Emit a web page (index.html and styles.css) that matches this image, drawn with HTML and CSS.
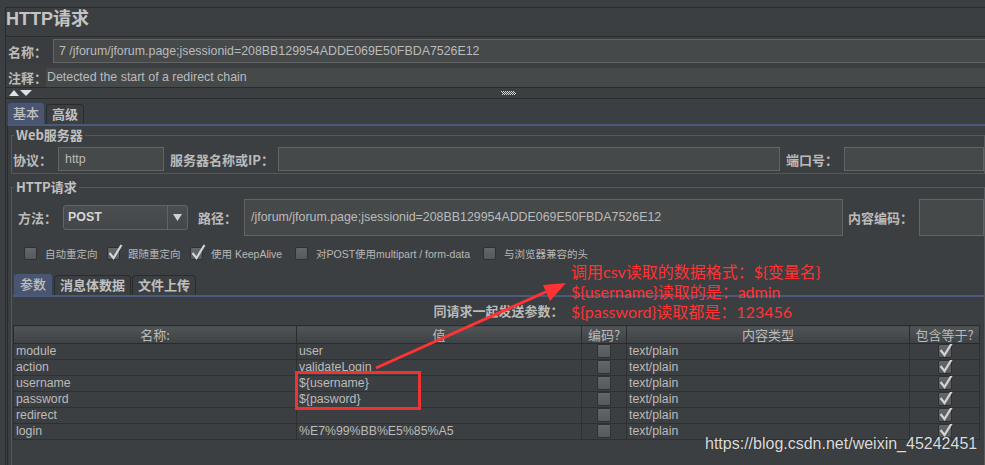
FILE: index.html
```html
<!DOCTYPE html>
<html lang="zh-CN">
<head>
<meta charset="utf-8">
<title>HTTP请求</title>
<link rel="stylesheet" href="styles.css">
</head>
<body>
<div class="frame">
  <h1 class="title">HTTP请求</h1>
  <div class="row name-row">
    <span class="lbl w-name">名称：</span>
    <div class="field grow">7 /jforum/jforum.page;jsessionid=208BB129954ADDE069E50FBDA7526E12</div>
  </div>
  <div class="row comment-row">
    <span class="lbl w-comment">注释：</span>
    <div class="field flat grow">Detected the start of a redirect chain</div>
  </div>
  <div class="splitter">
    <svg class="split-arrows" width="24" height="6" viewBox="0 0 24 6"><polygon points="0,6 5,0 10,6"/><polygon points="11,0 23,0 17,6"/></svg>
    <svg class="grip" width="16" height="4" viewBox="0 0 16 4"><g fill="#d8d8d8"><rect x="0" y="0" width="1" height="1"/><rect x="2" y="0" width="1" height="1"/><rect x="4" y="0" width="1" height="1"/><rect x="6" y="0" width="1" height="1"/><rect x="8" y="0" width="1" height="1"/><rect x="10" y="0" width="1" height="1"/><rect x="12" y="0" width="1" height="1"/><rect x="1" y="1" width="1" height="1"/><rect x="3" y="1" width="1" height="1"/><rect x="5" y="1" width="1" height="1"/><rect x="7" y="1" width="1" height="1"/><rect x="9" y="1" width="1" height="1"/><rect x="11" y="1" width="1" height="1"/><rect x="13" y="1" width="1" height="1"/><rect x="2" y="2" width="1" height="1"/><rect x="4" y="2" width="1" height="1"/><rect x="6" y="2" width="1" height="1"/><rect x="8" y="2" width="1" height="1"/><rect x="10" y="2" width="1" height="1"/><rect x="12" y="2" width="1" height="1"/><rect x="14" y="2" width="1" height="1"/><rect x="1" y="3" width="1" height="1"/><rect x="3" y="3" width="1" height="1"/><rect x="5" y="3" width="1" height="1"/><rect x="7" y="3" width="1" height="1"/><rect x="9" y="3" width="1" height="1"/><rect x="11" y="3" width="1" height="1"/><rect x="13" y="3" width="1" height="1"/></g></svg>
  </div>
  <div class="tabs">
    <div class="tab selected">基本</div>
    <div class="tab">高级</div>
  </div>
  <div class="tabpanel">
    <fieldset class="group">
      <legend>Web服务器</legend>
      <div class="row srv-row">
        <span class="lbl w-proto">协议：</span>
        <div class="field proto">http</div>
        <span class="lbl w-server">服务器名称或IP：</span>
        <div class="field grow"></div>
        <span class="lbl w-port">端口号：</span>
        <div class="field port"></div>
      </div>
    </fieldset>
    <fieldset class="group group-http">
      <legend>HTTP请求</legend>
      <div class="row method-row">
        <span class="lbl w-method">方法：</span>
        <div class="combo">
          <span class="combo-val">POST</span>
          <span class="combo-btn"><svg width="9" height="7" viewBox="0 0 9 7"><polygon points="0,0 9,0 4.5,7" fill="#d0d0d0"/></svg></span>
        </div>
        <span class="lbl w-path">路径：</span>
        <div class="field path grow">/jforum/jforum.page;jsessionid=208BB129954ADDE069E50FBDA7526E12</div>
        <span class="lbl w-enc">内容编码：</span>
        <div class="field enc"></div>
      </div>
      <div class="checks">
        <div class="chk c1"><span class="box"></span>自动重定向</div>
        <div class="chk c2"><span class="box checked"><svg viewBox="0 0 16 18" width="16" height="18"><path d="M2.5 10 L6.5 15 L14.5 2" fill="none" stroke="#d4d4d4" stroke-width="2.2"/></svg></span>跟随重定向</div>
        <div class="chk c3"><span class="box checked"><svg viewBox="0 0 16 18" width="16" height="18"><path d="M2.5 10 L6.5 15 L14.5 2" fill="none" stroke="#d4d4d4" stroke-width="2.2"/></svg></span>使用 KeepAlive</div>
        <div class="chk c4"><span class="box"></span>对POST使用multipart / form-data</div>
        <div class="chk c5"><span class="box"></span>与浏览器兼容的头</div>
      </div>
      <div class="subtabs">
        <div class="tab selected">参数</div>
        <div class="tab">消息体数据</div>
        <div class="tab">文件上传</div>
      </div>
      <div class="subpanel">
        <div class="param-title">同请求一起发送参数：</div>
        <table class="params">
          <colgroup>
            <col class="c-name"><col class="c-val"><col class="c-enc"><col class="c-type"><col class="c-inc">
          </colgroup>
          <thead>
            <tr><th>名称:</th><th>值</th><th>编码?</th><th>内容类型</th><th>包含等于?</th></tr>
          </thead>
          <tbody>
            <tr><td>module</td><td>user</td><td class="ctr"><span class="box"></span></td><td>text/plain</td><td class="ctr"><span class="box checked"><svg viewBox="0 0 16 18" width="16" height="18"><path d="M2.5 10 L6.5 15 L14.5 2" fill="none" stroke="#d4d4d4" stroke-width="2.2"/></svg></span></td></tr>
            <tr><td>action</td><td>validateLogin</td><td class="ctr"><span class="box"></span></td><td>text/plain</td><td class="ctr"><span class="box checked"><svg viewBox="0 0 16 18" width="16" height="18"><path d="M2.5 10 L6.5 15 L14.5 2" fill="none" stroke="#d4d4d4" stroke-width="2.2"/></svg></span></td></tr>
            <tr><td>username</td><td>${username}</td><td class="ctr"><span class="box"></span></td><td>text/plain</td><td class="ctr"><span class="box checked"><svg viewBox="0 0 16 18" width="16" height="18"><path d="M2.5 10 L6.5 15 L14.5 2" fill="none" stroke="#d4d4d4" stroke-width="2.2"/></svg></span></td></tr>
            <tr><td>password</td><td>${pasword}</td><td class="ctr"><span class="box"></span></td><td>text/plain</td><td class="ctr"><span class="box checked"><svg viewBox="0 0 16 18" width="16" height="18"><path d="M2.5 10 L6.5 15 L14.5 2" fill="none" stroke="#d4d4d4" stroke-width="2.2"/></svg></span></td></tr>
            <tr><td>redirect</td><td></td><td class="ctr"><span class="box"></span></td><td>text/plain</td><td class="ctr"><span class="box checked"><svg viewBox="0 0 16 18" width="16" height="18"><path d="M2.5 10 L6.5 15 L14.5 2" fill="none" stroke="#d4d4d4" stroke-width="2.2"/></svg></span></td></tr>
            <tr><td>login</td><td>%E7%99%BB%E5%85%A5</td><td class="ctr"><span class="box"></span></td><td>text/plain</td><td class="ctr"><span class="box checked"><svg viewBox="0 0 16 18" width="16" height="18"><path d="M2.5 10 L6.5 15 L14.5 2" fill="none" stroke="#d4d4d4" stroke-width="2.2"/></svg></span></td></tr>
          </tbody>
        </table>
      </div>
    </fieldset>
  </div>
</div>

<div class="note">
  <div>调用csv读取的数据格式：${变量名}</div>
  <div>${username}读取的是：admin</div>
  <div>${password}读取都是：123456</div>
</div>
<svg class="arrow" width="985" height="465" viewBox="0 0 985 465">
  <line x1="376" y1="368" x2="550" y2="290" stroke="#ff3333" stroke-width="3"/>
  <polygon points="566,283 543,285 550,301" fill="#ff3333"/>
</svg>
<div class="highlight"></div>
<div class="watermark">https://blog.csdn.net/weixin_45242451</div>
</body>
</html>
```
FILE: styles.css
```css
* { box-sizing: border-box; }
html, body { margin: 0; padding: 0; }
body {
  position: relative;
  width: 985px;
  height: 465px;
  overflow: hidden;
  background: #3c3f41;
  color: #bbbbbb;
  font-family: "Liberation Sans", "Noto Sans CJK SC", sans-serif;
  font-size: 12.4px;
}
.frame {
  margin: 7px 0 0 5px;
  border-top: 1px solid #2b2b2b;
  border-left: 1px solid #2b2b2b;
  height: 460px;
}
.title {
  margin: 0;
  height: 29px;
  line-height: 22px;
  font-size: 18px;
  font-weight: bold;
  font-family: "Liberation Sans", "Noto Sans CJK SC", sans-serif;
  border-bottom: 1px solid #2b2b2b;
  color: #c4c4c4;
}
.row { display: flex; align-items: center; }
.lbl {
  flex: none;
  font-family: "Noto Sans CJK SC", sans-serif;
  font-size: 13px;
  font-weight: bold;
  color: #bbbbbb;
  white-space: nowrap;
}
.field {
  height: 24px;
  line-height: 22px;
  background: #45494a;
  border: 1px solid #646464;
  padding-left: 6px;
  white-space: nowrap;
  overflow: hidden;
  color: #bbbbbb;
}
.grow { flex: 1; min-width: 0; }
.name-row { height: 26px; margin-top: 1px; background: #3a3d3f; }
.w-name { width: 47px; padding-left: 2px; }
.name-row .field { border-right: none; padding-left: 5px; }
.comment-row { height: 19px; margin-top: 4px; }
.w-comment { width: 40px; padding-left: 2px; }
.field.flat { border: none; height: 19px; line-height: 19px; padding-left: 1px; }
.splitter {
  height: 12px;
  border-top: 1px solid #2b2b2b;
  border-bottom: 1px solid #2b2b2b;
  display: flex;
  align-items: center;
}
.split-arrows { margin-left: 3px; fill: #dfe1e5; }
.grip { margin-left: 468px; }
.tabs, .subtabs { display: flex; align-items: flex-end; }
.tabs { height: 25px; padding-left: 1px; }
.tab {
  height: 20px;
  line-height: 18px;
  padding: 0 5px;
  margin-right: 1px;
  border: 1px solid #2b2b2b;
  border-bottom: none;
  border-radius: 4px 4px 0 0;
  background: #3c3f41;
  font-family: "Noto Sans CJK SC", sans-serif;
  font-size: 13px;
  font-weight: bold;
  color: #c0c0c0;
  white-space: nowrap;
}
.tab.selected {
  height: 22px;
  line-height: 20px;
  background: #4a5670;
  border-color: #34405a;
  font-weight: 500;
}
.tabpanel {
  margin-left: 1px;
  border-top: 2px solid #4a5a7e;
  border-left: 1px solid #2b2b2b;
  height: 360px;
}
fieldset.group {
  margin: 2px 0 0 3px;
  padding: 0;
  border: 1px solid #56595b;
  min-width: 0;
}
fieldset.group legend {
  margin-left: 2px;
  padding: 0 2px;
  font-family: "Noto Sans CJK SC", sans-serif;
  font-size: 13px;
  font-weight: bold;
  line-height: 14px;
  color: #c0c0c0;
}
.srv-row { padding: 5px 0 2px 0; }
.srv-row .field { height: 24px; }
.w-proto { width: 46px; padding-left: 1px; }
.proto { width: 106px; flex: none; }
.w-server { width: 114px; padding-left: 6px; }
.w-port { width: 64px; padding-left: 6px; }
.port { width: 140px; flex: none; }
.group-http { margin-top: 6px !important; height: 300px; }
.method-row { padding-top: 5px; height: 42px; }
.w-method { width: 51px; padding-left: 6px; }
.combo {
  flex: none;
  width: 125px;
  height: 25px;
  display: flex;
  border: 1px solid #646464;
  border-radius: 3px;
  background: linear-gradient(#4a4e50, #43474a);
}
.combo-val {
  flex: 1;
  padding-left: 4px;
  line-height: 22px;
  font-weight: bold;
  color: #d6d6d6;
  font-size: 12.4px;
}
.combo-btn {
  width: 20px;
  border-left: 1px solid #646464;
  display: flex;
  align-items: center;
  justify-content: center;
}
.w-path { width: 56px; padding-left: 10px; }
.path { height: 37px; line-height: 35px; }
.w-enc { width: 76px; padding-left: 5px; }
.enc { width: 65px; flex: none; height: 37px; }
.checks {
  display: flex;
  align-items: center;
  height: 13px;
  margin-top: 11px;
  padding-left: 12px;
}
.chk {
  flex: none;
  display: flex;
  align-items: center;
  font-family: "Liberation Sans", "Noto Sans CJK SC", sans-serif;
  font-size: 10.5px;
  color: #b8b8b8;
  white-space: nowrap;
}
.chk .box { margin-right: 8px; }
.c1, .c2 { width: 83px; }
.c3 { width: 105px; }
.c4 { width: 188px; }
.box {
  position: relative;
  display: inline-block;
  flex: none;
  width: 13px;
  height: 13px;
  border: 1px solid #2e3032;
  border-radius: 2px;
  background: linear-gradient(#646769, #56595b);
  vertical-align: middle;
}
.box svg { position: absolute; left: -1px; top: -5px; }
.subtabs { height: 22px; margin-top: 13px; padding-left: 1px; }
.subtabs .tab { padding: 0 5px; }
.subtabs .tab.selected { padding: 0 6px; }
.subpanel {
  margin-left: 1px;
  border-top: 2px solid #4a5a7e;
}
.param-title {
  height: 28px;
  line-height: 28px;
  text-align: center;
  font-family: "Noto Sans CJK SC", sans-serif;
  font-size: 13px;
  font-weight: bold;
  color: #bbbbbb;
}
.params {
  border-collapse: collapse;
  table-layout: fixed;
  width: 966px;
  border-left: 1px solid #2b2b2b;
}
.c-name { width: 283px; }
.c-val { width: 285px; }
.c-enc { width: 45px; }
.c-type { width: 283px; }
.c-inc { width: 70px; }
.params th {
  height: 18px;
  padding: 0;
  font-family: "Noto Sans CJK SC", sans-serif;
  font-size: 13px;
  font-weight: normal;
  line-height: 16px;
  color: #bbbbbb;
  background: linear-gradient(#505456, #3f4244);
  border: 1px solid #2b2b2b;
}
.params td {
  height: 16px;
  padding: 0 2px;
  line-height: 15px;
  font-size: 12.3px;
  color: #bbbbbb;
  border: 1px solid #2e3032;
  white-space: nowrap;
  overflow: hidden;
}
.params td.ctr { text-align: center; padding: 0; }
.params td .box { width: 14px; height: 14px; vertical-align: top; }

.note {
  position: absolute;
  left: 571px;
  top: 262px;
  font-family: "Lato", "Noto Sans CJK SC", sans-serif;
  font-size: 16px;
  line-height: 20px;
  color: #ff3333;
  white-space: nowrap;
}
.arrow { position: absolute; left: 0; top: 0; }
.highlight {
  position: absolute;
  left: 295px;
  top: 371px;
  width: 126px;
  height: 39px;
  border: 3px solid #ee3333;
}
.watermark {
  position: absolute;
  left: 705px;
  top: 434px;
  font-family: "Liberation Sans", sans-serif;
  font-size: 16px;
  line-height: 20px;
  color: #dcdcdc;
  text-shadow: 0 0 1px #222;
  white-space: nowrap;
}
```
